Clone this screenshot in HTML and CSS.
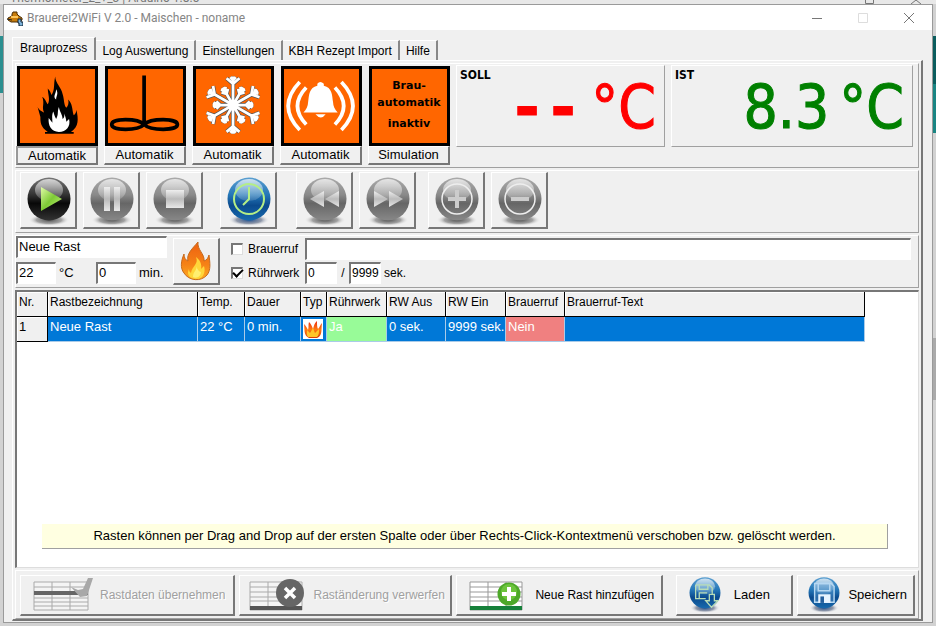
FILE: index.html
```html
<!DOCTYPE html>
<html lang="de">
<head>
<meta charset="utf-8">
<title>Brauerei2WiFi V 2.0 - Maischen - noname</title>
<link rel="stylesheet" href="styles.css">
</head>
<body>
<svg class="defs" aria-hidden="true">
  <defs>
    <linearGradient id="g-black" x1="0" y1="0" x2="0" y2="1"><stop offset="0" stop-color="#777"/><stop offset=".4" stop-color="#333"/><stop offset=".6" stop-color="#080808"/><stop offset="1" stop-color="#333"/></linearGradient>
    <linearGradient id="g-gray" x1="0" y1="0" x2="0" y2="1"><stop offset="0" stop-color="#aaa"/><stop offset=".4" stop-color="#8a8a8a"/><stop offset=".6" stop-color="#666"/><stop offset="1" stop-color="#888"/></linearGradient>
    <linearGradient id="g-blue" x1="0" y1="0" x2="0" y2="1"><stop offset="0" stop-color="#5b9fd0"/><stop offset=".4" stop-color="#2577b8"/><stop offset=".65" stop-color="#0b4b8e"/><stop offset="1" stop-color="#1769ad"/></linearGradient>
    <linearGradient id="g-shine" x1="0" y1="0" x2="0" y2="1"><stop offset="0" stop-color="#fff" stop-opacity=".7"/><stop offset="1" stop-color="#fff" stop-opacity=".12"/></linearGradient>
    <radialGradient id="g-shadow"><stop offset="0" stop-color="#333" stop-opacity=".85"/><stop offset=".6" stop-color="#555" stop-opacity=".5"/><stop offset="1" stop-color="#fff" stop-opacity="0"/></radialGradient>
    <radialGradient id="g-blueshadow"><stop offset="0" stop-color="#0b3f86" stop-opacity=".9"/><stop offset=".6" stop-color="#346" stop-opacity=".5"/><stop offset="1" stop-color="#fff" stop-opacity="0"/></radialGradient>
    <linearGradient id="g-green" x1="0" y1="0" x2="1" y2="1"><stop offset="0" stop-color="#e2fba8"/><stop offset=".5" stop-color="#7ecb35"/><stop offset="1" stop-color="#c4f17b"/></linearGradient>
    <linearGradient id="g-silver" x1="0" y1="0" x2="0" y2="1"><stop offset="0" stop-color="#eee"/><stop offset=".5" stop-color="#bbb"/><stop offset="1" stop-color="#e8e8e8"/></linearGradient>
    <linearGradient id="g-fire" x1="0" y1="0" x2="0" y2="1"><stop offset="0" stop-color="#ee6010"/><stop offset=".6" stop-color="#f58216"/><stop offset="1" stop-color="#ffae22"/></linearGradient>
    <linearGradient id="g-fire2" x1="0" y1="0" x2="0" y2="1"><stop offset="0" stop-color="#e92c10"/><stop offset=".5" stop-color="#ff7a12"/><stop offset="1" stop-color="#d83a08"/></linearGradient>
    <g id="gloss"><circle cx="25" cy="22" r="21.500"/><ellipse cx="25" cy="13" rx="14" ry="11" fill="url(#g-shine)"/></g>
    <g id="arm"><path d="M0 0V-31M0-23L-7-29M0-23L7-29M0-27L-3-30M0-27L3-30"/></g>
    <g id="twig"><path d="M0 0V-22M0-14L-4-18M0-14L4-18M0-18L-3-21M0-18L3-21"/></g>
    <g id="flake">
      <use href="#arm"/><use href="#arm" transform="rotate(60)"/><use href="#arm" transform="rotate(120)"/><use href="#arm" transform="rotate(180)"/><use href="#arm" transform="rotate(240)"/><use href="#arm" transform="rotate(300)"/>
      <use href="#twig" transform="rotate(30)"/><use href="#twig" transform="rotate(90)"/><use href="#twig" transform="rotate(150)"/><use href="#twig" transform="rotate(210)"/><use href="#twig" transform="rotate(270)"/><use href="#twig" transform="rotate(330)"/>
    </g>
  </defs>
</svg>

<div class="backdrop"><span>Thermometer_2_+_3 | Arduino 1.8.5</span><svg viewBox="0 0 60 4"><path d="M1.500 0v3.500h8V0M47 4l5-4 5 4"/></svg></div>
<div class="window">
  <header class="titlebar">
    <svg class="app-icon" viewBox="0 0 16 16"><path d="M6 2h4v2l2 2 3 2v2l-3 2H4L1 10V8l4-2V4z" fill="#c77c0c" stroke="#4a2c04"/><path d="M4 7h7" stroke="#ffc65a" stroke-width="2"/><path d="M0 9l5 1" stroke="#222"/><path d="M11 9h3v3h2v4h-4v-3h-1z" fill="#7fb4dc" stroke="#123"/></svg>
    <h1>Brauerei2WiFi V 2.0 - Maischen - noname</h1>
    <div class="sys">
      <button aria-label="Minimieren"><svg viewBox="0 0 12 12"><path d="M1 6.500h10"/></svg></button>
      <button aria-label="Maximieren" disabled><svg viewBox="0 0 12 12"><path d="M1.500 1.500h9v9h-9z"/></svg></button>
      <button aria-label="Schließen"><svg viewBox="0 0 12 12"><path d="M1 1l10 10M11 1L1 11"/></svg></button>
    </div>
  </header>

  <nav class="tabs" role="tablist">
    <button role="tab" class="tab active" aria-selected="true">Brauprozess</button>
    <button role="tab" class="tab">Log Auswertung</button>
    <button role="tab" class="tab">Einstellungen</button>
    <button role="tab" class="tab">KBH Rezept Import</button>
    <button role="tab" class="tab">Hilfe</button>
  </nav>

  <main class="page">
    <section class="panel top">
      <div class="device">
        <svg class="tile" viewBox="0 0 81 80"><path d="M38 8C38 15 45 20 46 27C48 33 47 38 50 42C52 40 53 37 52 33C57 38 56 43 58 50C60 49 61 46 61 44C63 54 64 62 55 68H58V70H27V68H30C22 63 22 57 22 52L19 41C21 45 24 46 26 47C23 41 27 38 24 30C28 33 28 36 30 38C33 33 30 27 30 21C33 24 33 26 34 28C38 22 36 17 38 8Z"/><path d="M39 22c3 5 0 7 0 11-4-3 0-6 0-11zM42 41c1 6 4 8 4 13 2-1 2-4 2-6 1 4 2 6 2 9l3-3c2 8-3 14-11 14s-12-7-11-15l4 5c0-5-1-8 1-12 1 4 2 6 3 8 3-5 1-8 3-13z" fill="#fff"/></svg>
        <button class="mode focused">Automatik</button>
      </div>
      <div class="device">
        <svg class="tile" viewBox="0 0 81 80"><path d="M39 7V60M39 60C32 53 4 53 4 60S32 67 39 60S75 53 75 60S46 67 39 60" fill="none" stroke="#000" stroke-width="4"/></svg>
        <button class="mode">Automatik</button>
      </div>
      <div class="device">
        <svg class="tile" viewBox="0 0 81 80"><g transform="translate(40 39)" fill="none"><use href="#flake" stroke="#555" stroke-width="4.500"/><use href="#flake" stroke="#fff" stroke-width="3"/><circle r="6" fill="#fff"/></g></svg>
        <button class="mode">Automatik</button>
      </div>
      <div class="device">
        <svg class="tile" viewBox="0 0 81 80"><path d="M36 16q3-4 7 0v2c9 2 9 10 10 18 0 4 2 8 5 11H21c3-3 5-7 5-11 1-8 1-16 10-18zM34 49h11q-5 7-11 0z" fill="#fff"/><path d="M17 14Q-8 40 17 66M24 20Q5 40 24 60M62 14Q87 40 62 66M55 20Q74 40 55 60" fill="none" stroke="#fff" stroke-width="4"/></svg>
        <button class="mode">Automatik</button>
      </div>
      <div class="device">
        <div class="tile tile-text"><span>Brau-<br>automatik</span><span>inaktiv</span></div>
        <button class="mode">Simulation</button>
      </div>
      <div class="display soll"><h2>SOLL</h2><div class="reading"><span class="dashes">--</span><span class="unit">°C</span></div></div>
      <div class="display ist"><h2>IST</h2><div class="reading"><span class="value">8.3</span><span class="unit">°C</span></div></div>
    </section>

    <section class="panel toolbar">
      <button class="round" aria-label="Start"><svg viewBox="0 0 50 50"><ellipse cx="25" cy="43" rx="21" ry="6" fill="url(#g-shadow)"/><use href="#gloss" fill="url(#g-black)"/><path d="M17 10l21 12-21 12z" fill="url(#g-green)"/></svg></button>
      <button class="round" aria-label="Pause"><svg viewBox="0 0 50 50"><ellipse cx="25" cy="43" rx="21" ry="6" fill="url(#g-shadow)"/><use href="#gloss" fill="url(#g-gray)"/><path d="M17 10h6v24h-6zM27 10h6v24h-6z" fill="url(#g-silver)"/></svg></button>
      <button class="round" aria-label="Stopp"><svg viewBox="0 0 50 50"><ellipse cx="25" cy="43" rx="21" ry="6" fill="url(#g-shadow)"/><use href="#gloss" fill="url(#g-gray)"/><path d="M16 13h18v18H16z" fill="url(#g-silver)"/></svg></button>
      <button class="round timer" aria-label="Zeitsteuerung"><svg viewBox="0 0 50 50"><ellipse cx="25" cy="43" rx="21" ry="6" fill="url(#g-blueshadow)"/><use href="#gloss" fill="url(#g-blue)"/><g fill="none" stroke="#b4ee86" stroke-width="2"><circle cx="25" cy="22" r="15"/><path d="M25 10v12l-6 6"/></g></svg></button>
      <button class="round seek" aria-label="Zurück"><svg viewBox="0 0 50 50"><ellipse cx="25" cy="43" rx="21" ry="6" fill="url(#g-shadow)"/><use href="#gloss" fill="url(#g-gray)"/><path d="M24 14v16L10 22zM39 14v16l-14-8z" fill="url(#g-silver)"/></svg></button>
      <button class="round" aria-label="Vor"><svg viewBox="0 0 50 50"><ellipse cx="25" cy="43" rx="21" ry="6" fill="url(#g-shadow)"/><use href="#gloss" fill="url(#g-gray)"/><path d="M11 14v16l14-8zM26 14v16l14-8z" fill="url(#g-silver)"/></svg></button>
      <button class="round step" aria-label="Mehr"><svg viewBox="0 0 50 50"><ellipse cx="25" cy="43" rx="21" ry="6" fill="url(#g-shadow)"/><use href="#gloss" fill="url(#g-gray)"/><circle cx="25" cy="22" r="15" fill="none" stroke="#eee" stroke-width="1.500"/><path d="M23 13h4v7h7v4h-7v7h-4v-7h-7v-4h7z" fill="#ccc"/></svg></button>
      <button class="round" aria-label="Weniger"><svg viewBox="0 0 50 50"><ellipse cx="25" cy="43" rx="21" ry="6" fill="url(#g-shadow)"/><use href="#gloss" fill="url(#g-gray)"/><circle cx="25" cy="22" r="15" fill="none" stroke="#eee" stroke-width="1.500"/><path d="M16 20h18v4H16z" fill="#ccc"/></svg></button>
    </section>

    <section class="panel editor">
      <div class="rest">
        <input class="field" aria-label="Rastbezeichnung" value="Neue Rast">
        <div class="line">
          <input class="field num" id="temp" value="22"><label class="temp-label" for="temp">°C</label>
          <input class="field num" id="dauer" value="0"><label for="dauer">min.</label>
        </div>
      </div>
      <button class="heat" aria-label="Heizen"><svg viewBox="0 0 30 40"><path d="M17 1c-5 6-12 12-10 19-3-1-4-4-4-7-3 7-4 14 0 19 5 8 17 9 23 2 4-5 3-12 2-20-1 3-2 5-5 6 1-7-7-11-6-19z" fill="url(#g-fire)" stroke="#c56a1c"/><path d="M15 16c3 7-4 9-5 16-2-1-2-3-2-4-3 6 1 10 8 10 6 0 9-7 7-13l-3 3c1-5-1-9-5-12z" fill="#ffd63a"/><path d="M15 24c2 5-3 6-3 12 4 2 8-1 8-5-2 0-4-3-5-7z" fill="#ffef70"/></svg></button>
      <div class="options">
        <div class="line">
          <input type="checkbox" id="ruf"><label class="option" for="ruf">Brauerruf</label>
          <input class="field call" aria-label="Brauerruf-Text">
        </div>
        <div class="line">
          <input type="checkbox" id="rw" checked><label class="option" for="rw">Rührwerk</label>
          <input class="field tiny" id="aus" aria-label="Rührwerk aus" value="0"><span class="slash">/</span>
          <input class="field tiny" id="ein" value="9999"><label for="ein">sek.</label>
        </div>
      </div>
    </section>

    <section class="grid-area">
      <table>
        <colgroup><col class="c-nr"><col class="c-name"><col class="c-temp"><col class="c-dauer"><col class="c-typ"><col class="c-60"><col class="c-rw"><col class="c-60"><col class="c-rw"><col class="c-text"></colgroup>
        <thead><tr><th>Nr.</th><th>Rastbezeichnung</th><th>Temp.</th><th>Dauer</th><th>Typ</th><th>Rührwerk</th><th>RW Aus</th><th>RW Ein</th><th>Brauerruf</th><th>Brauerruf-Text</th></tr></thead>
        <tbody><tr><th>1</th><td>Neue Rast</td><td>22 °C</td><td>0 min.</td><td class="typ"><svg viewBox="0 0 20 20"><path d="M0 0h20v20H0z" fill="#fff"/><path d="M1 5c2 2 3 4 4 6 1-3 0-5 1-8 2 2 3 4 4 7 1-3 1-5 4-8 0 4 0 6 1 8 2-2 2-4 4-6-1 5 1 13-5 15H6C0 16 2 10 1 5z" fill="url(#g-fire2)"/><path d="M5 18c-2-3-1-5-1-7l3 3 3-5 2 5 4-4c0 4 0 6-2 8z" fill="#ffc62a"/></svg></td><td class="yes">Ja</td><td>0 sek.</td><td>9999 sek.</td><td class="no">Nein</td><td></td></tr></tbody>
      </table>
      <p class="hint">Rasten können per Drag and Drop auf der ersten Spalte oder über Rechts-Click-Kontextmenü verschoben bzw. gelöscht werden.</p>
    </section>

    <footer class="panel actions">
      <button class="action apply" disabled><svg class="sheet" viewBox="0 0 60 34"><path d="M1 4h54v28H1z" fill="#f4f4f4"/><path d="M1 4h54v28H1zM1 9h54M1 20h54M1 24h54M1 28h54M19 4v28M37 4v28" fill="none" stroke="#aaa"/><path d="M1 13h54v4H1z" fill="#666"/><path d="M38 9l7 3 5-1 5-11h5l-6 18-7 1z" fill="#a8a8a8"/></svg><span>Rastdaten übernehmen</span></button>
      <button class="action discard" disabled><svg class="sheet" viewBox="0 0 60 34"><path d="M1 4h52v28H1z" fill="#f4f4f4"/><path d="M1 4h52v28H1zM1 9h52M1 14h52M1 19h52M1 23h52M19 4v28M37 4v28" fill="none" stroke="#aaa"/><path d="M1 28h52v4H1z" fill="#555"/><circle cx="41" cy="15" r="14" fill="#666"/><path d="M36 10l10 10M46 10L36 20" stroke="#fff" stroke-width="3.500"/></svg><span>Raständerung verwerfen</span></button>
      <button class="action add"><svg class="sheet" viewBox="0 0 60 34"><path d="M1 4h52v28H1z" fill="#fff"/><path d="M1 4h52v28H1zM1 9h52M1 14h52M1 19h52M1 23h52M19 4v28M37 4v28" fill="none" stroke="#999"/><path d="M1 28h52v4H1z" fill="#16803a"/><circle cx="40" cy="16" r="11.500" fill="#4da829"/><circle cx="40" cy="14" r="8" fill="#6cc43c"/><path d="M38 9h4v5h5v4h-5v5h-4v-5h-5v-4h5z" fill="#fff"/></svg><span>Neue Rast hinzufügen</span></button>
      <button class="action load"><svg class="disk" viewBox="0 0 50 50"><ellipse cx="25" cy="43" rx="21" ry="7" fill="url(#g-blueshadow)"/><use href="#gloss" fill="url(#g-blue)"/><path d="M12 11h19l4 4v9M12 11v19h14M17 11v6h12v-6M17 30v-8h11M31 24h7v9h5l-9 9-8-9h5z" fill="none" stroke="#b9ddb8" stroke-width="1.800"/></svg><span>Laden</span></button>
      <button class="action save"><svg class="disk" viewBox="0 0 50 50"><ellipse cx="25" cy="43" rx="21" ry="7" fill="url(#g-blueshadow)"/><use href="#gloss" fill="url(#g-blue)"/><path d="M12 9h23l4 4v22H12z" fill="#5c9bd0" fill-opacity=".4" stroke="#b7d8f2" stroke-width="2"/><path d="M17 9h16v10H17z" fill="none" stroke="#b7d8f2" stroke-width="2"/><path d="M17 24h17v12H17z" fill="#e8f4ff"/><path d="M20 27h5v9h-5z" fill="#245f9d"/></svg><span>Speichern</span></button>
    </footer>
  </main>
</div>
</body>
</html>
```
FILE: styles.css
```css
* { box-sizing: border-box; }

body {
  margin: 0;
  min-height: 100vh;
  display: flex;
  flex-direction: column;
  font: 13px/16px "Liberation Sans", Arial, sans-serif;
  color: #000;
  background:
    linear-gradient(#0b5d5e 0 48px, #1a8583 48px 97px, transparent 97px) right 36px / 3px 97px no-repeat,
    linear-gradient(#aaa, #aaa) right 338px / 3px 62px no-repeat,
    linear-gradient(#2b8f90, #2b8f90) left 36px / 3px 57px no-repeat,
    #d2d2d2;
}

button, input { font: inherit; color: inherit; margin: 0; }
button { padding: 0; background: #f0f0f0; border: 0; }
h1, h2, p { margin: 0; font-weight: normal; }
.defs { position: absolute; width: 0; height: 0; }

.backdrop {
  height: 4px;
  overflow: hidden;
  display: flex;
  align-items: flex-end;
  justify-content: space-between;
  padding: 0 12px 0 10px;
  color: #777;
  background: #e8e8e8;
  font: 12px/12px Roboto, sans-serif;
}
.backdrop svg { width: 60px; height: 4px; fill: none; stroke: #777; }

.window {
  flex: 1;
  display: flex;
  flex-direction: column;
  margin: 0 3px 3px;
  padding-bottom: 1px;
  background: #f0f0f0;
  border: 1px solid #9a9a9a;
}

.titlebar {
  display: flex;
  align-items: center;
  gap: 4px;
  height: 25px;
  padding-left: 3px;
  background: #fff;
}
.titlebar h1 { flex: 1; font: 12px/16px Roboto, sans-serif; color: #858585; }
.app-icon { width: 16px; height: 16px; }
.sys { display: flex; }
.sys button { width: 46px; height: 24px; background: none; display: grid; place-items: center; }
.sys svg { width: 12px; height: 12px; fill: none; stroke: #777; }
.sys button:disabled svg { stroke: #ddd; }

.tabs { display: flex; align-items: flex-end; height: 30px; padding-left: 8px; font-size: 12px; }
.tab {
  height: 20px;
  padding: 0 6px;
  border-top: 1px solid #fff;
  border-right: 2px solid #888;
  white-space: nowrap;
}
.tab.active { height: 23px; padding: 0 7px 3px; border-left: 1px solid #fff; }

.page {
  flex: 1;
  display: flex;
  flex-direction: column;
  gap: 2px;
  margin: 0 9px 0 8px;
  padding: 2px 2px 0;
  border: 1px solid #fff;
  border-right: 2px solid #777;
  border-bottom: 2px solid #777;
}

.panel {
  display: flex;
  border: 1px solid #fff;
  border-right-color: #a0a0a0;
  border-bottom-color: #a0a0a0;
}

.top { gap: 6px; padding: 1px 5px 2px 0; }
.device { width: 82px; flex: none; display: flex; flex-direction: column; align-items: center; padding-top: 1px; }
.tile { width: 81px; height: 80px; background: #ff6600; border: 3px solid #000; }
.tile-text {
  display: flex;
  flex-direction: column;
  gap: 4px;
  padding-top: 8px;
  text-align: center;
  font: bold 11px/17px "DejaVu Sans", sans-serif;
}
.mode {
  width: 82px;
  height: 19px;
  border: 1px solid #fff;
  border-right: 2px solid #777;
  border-bottom: 2px solid #777;
}
.mode.focused { border: 2px solid #777; border-left-color: #999; border-top-color: #999; }

.display {
  flex: 207 1 0;
  height: 82px;
  display: flex;
  justify-content: space-between;
  padding: 0 8px 0 3px;
  border: 1px solid #fff;
  border-right-color: #a0a0a0;
  border-bottom-color: #a0a0a0;
}
.display.ist { flex-grow: 242; }
.display h2 { font: bold 12px/18px "DejaVu Sans Condensed", "DejaVu Sans", sans-serif; color: #000; }
.reading {
  display: flex;
  gap: 10px;
  font: 60px/82px "DejaVu Sans Condensed", "DejaVu Sans", sans-serif;
  -webkit-text-stroke: 1px currentColor;
}
.soll { color: #f00; }
.ist { color: #008000; }
.dashes { font-family: "DejaVu Sans Mono", monospace; font-weight: bold; }

.toolbar { gap: 6px; padding: 1px 4px 3px; }
.round {
  width: 57px;
  height: 57px;
  display: grid;
  place-items: center;
  padding: 3px 0 0 2px;
  border: 1px solid #fff;
  border-right: 2px solid #777;
  border-bottom: 2px solid #777;
}
.round svg { width: 50px; height: 50px; }
.round.timer { margin-left: 11px; }
.round.seek { margin-left: 13px; }
.round.step { margin-left: 6px; }

.editor { gap: 6px; padding: 0 7px 2px 0; }
.field {
  width: 100%;
  height: 22px;
  padding: 0 0 2px 1px;
  background: #fff;
  border: 1px solid #fff;
  border-top: 2px solid #777;
  border-left: 2px solid #777;
  border-radius: 0;
}
.line { display: flex; align-items: center; gap: 3px; }
.rest { width: 151px; display: flex; flex-direction: column; gap: 4px; }
.num { width: 40px; flex: none; }
.temp-label { width: 34px; }
.heat {
  width: 47px;
  height: 47px;
  margin-top: 2px;
  display: grid;
  place-items: center;
  border: 1px solid #fff;
  border-right: 2px solid #777;
  border-bottom: 2px solid #777;
}
.heat svg { width: 32px; height: 40px; }
.options { flex: 1; display: flex; flex-direction: column; gap: 2px; padding: 2px 0 0 5px; font-size: 12px; }
input[type="checkbox"] {
  appearance: none;
  width: 12px;
  height: 12px;
  flex: none;
  background: #fff;
  border: 1px solid #ddd;
  border-top: 2px solid #777;
  border-left: 2px solid #777;
  display: grid;
  place-items: center;
}
input[type="checkbox"]:checked::before {
  content: "";
  width: 8px;
  height: 4px;
  margin-bottom: 4px;
  border-left: 2px solid #000;
  border-bottom: 2px solid #000;
  transform: rotate(-45deg);
}
.option { width: 54px; margin-left: 2px; flex: none; white-space: nowrap; }
.call { flex: 1; }
.tiny { width: 32px; flex: none; }
.slash { width: 6px; text-align: center; }

.grid-area {
  flex: 1;
  display: flex;
  flex-direction: column;
  justify-content: space-between;
  background: #fff;
  border: 1px solid #ddd;
  border-top: 2px solid #777;
  border-left: 2px solid #777;
}
table { table-layout: fixed; width: 848px; border-collapse: separate; border-spacing: 0; }
th, td { height: 25px; padding: 0 0 4px 2px; text-align: left; font-weight: normal; white-space: nowrap; vertical-align: middle; }
th { background: #f0f0f0; border-right: 1px solid #000; border-bottom: 1px solid #000; box-shadow: inset 1px 1px #fff; }
thead th { font-size: 12px; }
td { color: #fff; background: #0078d7; border-right: 1px solid #aacbe8; border-bottom: 1px solid #aacbe8; }
.typ { padding: 0 0 0 2px; }
.typ svg { display: block; width: 20px; height: 20px; }
.yes { background: #98fb98; }
.no { background: #f08080; }
.c-nr { width: 31px; }
.c-name { width: 150px; }
.c-temp { width: 47px; }
.c-dauer { width: 56px; }
.c-typ { width: 26px; }
.c-rw { width: 59px; }
.c-60 { width: 60px; }
.hint {
  margin: 0 30px 18px 25px;
  padding: 4px 0;
  text-align: center;
  background: #ffffe1;
  border-right: 1px solid #a0a0a0;
  border-bottom: 1px solid #a0a0a0;
}

.actions { gap: 4px; padding: 4px 3px 2px 4px; }
.action {
  height: 41px;
  display: flex;
  align-items: center;
  border: 1px solid #fff;
  border-right: 2px solid #777;
  border-bottom: 2px solid #777;
  white-space: nowrap;
}
.action:disabled { color: #a0a0a0; text-shadow: 1px 1px #fff; }
.action span { flex: 1; text-align: center; }
.sheet { width: 60px; height: 34px; flex: none; }
.disk { width: 36px; height: 36px; flex: none; }
.apply, .discard, .add { padding-left: 12px; font-size: 12px; }
.apply { flex: 1 1 215px; }
.discard { flex: 1 1 214px; padding-left: 9px; }
.add { flex: 1 1 207px; }
.load { flex: 1 1 118px; margin-left: 9px; padding: 0 10px; }
.save { flex: 1 1 118px; padding-left: 8px; }
```
